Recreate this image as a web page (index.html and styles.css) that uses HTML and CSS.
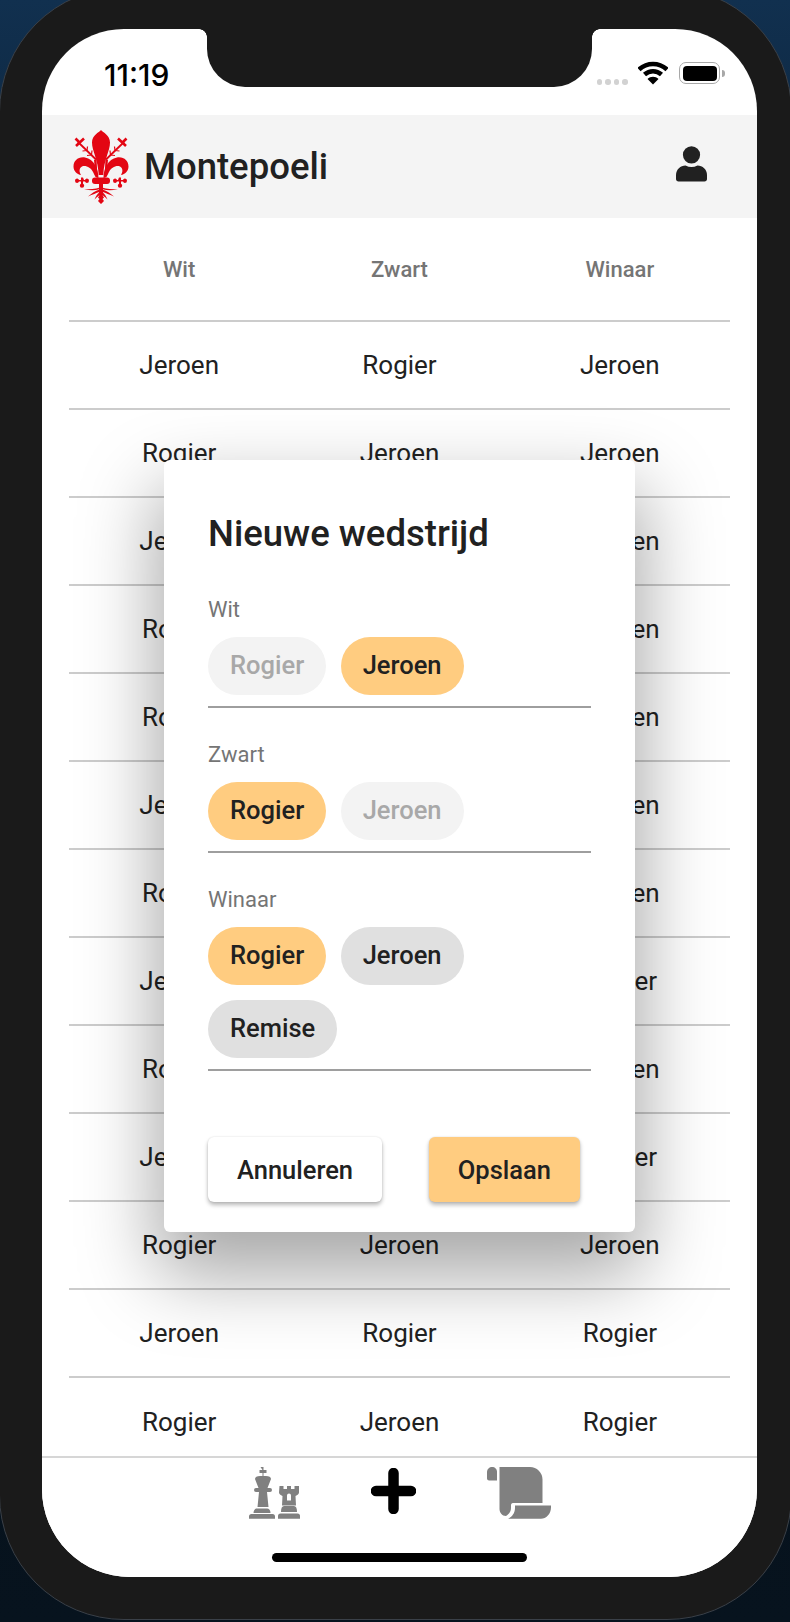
FILE: index.html
```html
<!DOCTYPE html>
<html lang="nl">
<head>
<meta charset="utf-8">
<title>Montepoeli</title>
<link rel="stylesheet" href="styles.css">
</head>
<body>
<div class="device">
  <div class="screen">
    <div class="notch"></div>
    <div class="status">
      <span class="time">11:19</span>
      <div class="status-icons">
        <div class="signal"><i></i><i></i><i></i><i></i></div>
        <svg class="wifi" width="30" height="24" viewBox="0 0 30 24">
          <path d="M1 8.500C9 1 21 1 29 8.500" class="wifi-arc"/>
          <path d="M6.500 13.500C11.500 9 18.500 9 23.500 13.500" class="wifi-arc"/>
          <path d="M15 23.500L9.500 18C12.500 15 17.500 15 20.500 18Z" class="wifi-dot"/>
        </svg>
        <div class="battery"><div class="battery-fill"></div></div>
        <div class="battery-nub"></div>
      </div>
    </div>
    <header class="appbar">
      <svg class="logo" width="56" height="75" viewBox="0 0 56 75">
        <defs>
          <g id="half">
            <path d="M30.500 49C30.500 40 35 30 44 28.500C51 27.500 55.500 32 55.500 37.500C55.500 42 52 45.500 48 46C50 43 50 39 47 37.500C43 36 38 39 36 43C34.500 46 33.500 49 30.500 49Z"/>
            <path d="M33 30.500L51 13" class="logo-line"/>
            <path d="M37.500 26L37 21.500M42 21.500L41.500 17.500M37.500 26L42 26.500M42 21.500L46.500 22" class="logo-thin"/>
            <path d="M45 9.500L53 17M53.500 9.500L50 13" class="logo-cross"/>
            <path d="M46 47.500h2v2.500h2a2 2 0 0 1 1.800-1.500a2.200 2.200 0 0 1 0 4.400a2 2 0 0 1-1.800-1.300h-2v2.200a2 2 0 0 1 1.200 1.800a2.200 2.200 0 0 1-4.400 0a2 2 0 0 1 1.200-1.800v-2.200h-2a2 2 0 0 1-1.800 1.300a2.200 2.200 0 0 1 0-4.400a2 2 0 0 1 1.800 1.500h1Z" transform="translate(0 1)"/>
            <path d="M29 58.500C34 60 39 60 45 60.500C39 61.500 34 61.500 30.500 60.500Z"/>
            <path d="M29.500 60.500C34 62 37 64 41 67.500C36 65.500 33 64 29.500 63Z"/>
            <path d="M29 63C32 65 33 67 34.500 70.500C32 68 30 66.500 28.500 65.500Z"/>
          </g>
        </defs>
        <g class="logo-fill">
          <use href="#half"/>
          <use href="#half" transform="matrix(-1 0 0 1 56 0)"/>
          <path d="M28 1C30 3.500 37 6 37 13.500C37 22 31 30 30.300 46H25.700C25 30 19 22 19 13.500C19 6 26 3.500 28 1Z"/>
          <path d="M23.500 30L24.500 48H22.700L21 31ZM32.500 30L31.500 48H33.300L35 31Z"/>
          <rect x="19" y="48.500" width="18" height="6.500" rx="3"/>
          <path d="M26 55H30V66.500H26Z"/>
          <path d="M28 64L31 68.500L29.500 70L31 72L28 75L25 72L26.500 70L25 68.500Z"/>
        </g>
      </svg>
      <h1 class="brand">Montepoeli</h1>
      <svg class="user" width="31" height="36" viewBox="0 0 31 36">
        <circle cx="15.500" cy="8.800" r="8.600"/>
        <path d="M0 33V29C0 23.500 4.500 19.500 9.500 19.500C13.500 21.500 17.500 21.500 21.500 19.500C26.500 19.500 31 23.500 31 29V33C31 34.500 30 35.500 28.500 35.500H2.500C1 35.500 0 34.500 0 33Z"/>
      </svg>
    </header>
    <main class="content">
      <div class="table">
        <div class="row head"><span>Wit</span><span>Zwart</span><span>Winaar</span></div>
        <div class="row"><span>Jeroen</span><span>Rogier</span><span>Jeroen</span></div>
        <div class="row"><span>Rogier</span><span>Jeroen</span><span>Jeroen</span></div>
        <div class="row"><span>Jeroen</span><span>Rogier</span><span>Jeroen</span></div>
        <div class="row"><span>Rogier</span><span>Jeroen</span><span>Jeroen</span></div>
        <div class="row"><span>Rogier</span><span>Jeroen</span><span>Jeroen</span></div>
        <div class="row"><span>Jeroen</span><span>Rogier</span><span>Jeroen</span></div>
        <div class="row"><span>Rogier</span><span>Jeroen</span><span>Jeroen</span></div>
        <div class="row"><span>Jeroen</span><span>Rogier</span><span>Rogier</span></div>
        <div class="row"><span>Rogier</span><span>Jeroen</span><span>Jeroen</span></div>
        <div class="row"><span>Jeroen</span><span>Rogier</span><span>Rogier</span></div>
        <div class="row"><span>Rogier</span><span>Jeroen</span><span>Jeroen</span></div>
        <div class="row"><span>Jeroen</span><span>Rogier</span><span>Rogier</span></div>
        <div class="row"><span>Rogier</span><span>Jeroen</span><span>Rogier</span></div>
      </div>
      <section class="modal">
        <h2 class="modal-title">Nieuwe wedstrijd</h2>
        <div class="field">
          <div class="field-label">Wit</div>
          <div class="chips">
            <span class="chip off">Rogier</span>
            <span class="chip on">Jeroen</span>
          </div>
        </div>
        <div class="field">
          <div class="field-label">Zwart</div>
          <div class="chips">
            <span class="chip on">Rogier</span>
            <span class="chip off">Jeroen</span>
          </div>
        </div>
        <div class="field">
          <div class="field-label">Winaar</div>
          <div class="chips">
            <span class="chip on">Rogier</span>
            <span class="chip">Jeroen</span>
            <span class="chip">Remise</span>
          </div>
        </div>
        <div class="actions">
          <button class="btn btn-cancel">Annuleren</button>
          <button class="btn btn-save">Opslaan</button>
        </div>
      </section>
    </main>
    <nav class="tabbar">
      <svg class="tab-icon" width="52" height="52" viewBox="0 0 52 52">
        <path d="M11.500 0h3v3h3v3h-3v3h2.500c3 0 5 1 5 3l-3.500 9h2.500a2 2 0 0 1 0 4h-3l1.500 15h-11l1.500-15h-3a2 2 0 0 1 0-4h2.500l-3.500-9c0-2 2-3 5-3h2.500v-3h-3v-3h3Z"/>
        <path d="M8 41.500h10c2 0 3.500 1.500 3.500 4.500h-17c0-3 1.500-4.500 3.500-4.500Z"/>
        <path d="M2.500 47h21a2.500 2.500 0 0 1 2.500 2.500v2.300h-26v-2.300a2.500 2.500 0 0 1 2.500-2.500Z"/>
        <path d="M30.500 19h4v3h3.500v-3h4v3h3.500v-3h4.500v6.500c0 1.500-1.500 2.500-3.500 3.500l.5 9.500h-14l.5-9.500c-2-1-3.500-2-3.500-3.500ZM38 28.500v5h4v-5a2 2 0 0 0-4 0Z" fill-rule="evenodd"/>
        <path d="M35 39h10c2 0 3 2 3 6h-16c0-4 1-6 3-6Z"/>
        <path d="M31.500 46.500h17a2.500 2.500 0 0 1 2.500 2.500v2.800h-22v-2.800a2.500 2.500 0 0 1 2.500-2.500Z"/>
      </svg>
      <svg class="tab-plus" width="45" height="46" viewBox="0 0 45 46">
        <path d="M22.500 5V41M5 23H40"/>
      </svg>
      <svg class="tab-icon" width="65" height="52" viewBox="0 0 65 52">
        <path d="M0 5C0 2 2.500 0 5 0C8 0 10 2 10 5V13.500H2C1 13.500 0 12.500 0 11.500Z"/>
        <path d="M12.500 0H43A12.500 12.500 0 0 1 55.500 12.500V36H26C24.500 36 24 37 24 38.500V41C24 45 21.500 47.500 19 49C15 49 12.500 45.500 12.500 42Z"/>
        <path d="M28 38.500H64V40.500C64 47 59 51.800 54 51.800H21C25 50 28 46 28 41Z"/>
      </svg>
    </nav>
    <div class="home-indicator"></div>
  </div>
</div>
</body>
</html>
```
FILE: styles.css
```css
* { box-sizing: border-box; }
html, body { margin: 0; padding: 0; }
body {
  width: 790px;
  height: 1622px;
  overflow: hidden;
  font-family: Roboto, "Liberation Sans", sans-serif;
  color: #212121;
  background: linear-gradient(180deg, #11304f 0%, #0b2238 18%, #04101a 60%, #07131e 100%);
}
.device {
  width: 793px;
  height: 1633px;
  margin: -13px 0 0 -1px;
  padding: 41px 34px 42px 42px;
  background: #1a1a1a;
  border: 1px solid #3a4048;
  border-radius: 125px;
}
.screen {
  position: relative;
  width: 715px;
  height: 1548px;
  background: #fff;
  border-radius: 82px 82px 88px 88px;
  overflow: hidden;
  display: flex;
  flex-direction: column;
}
.notch {
  position: absolute;
  top: 0;
  left: 165px;
  width: 385px;
  height: 58px;
  background: #1a1a1a;
  border-radius: 0 0 38px 38px;
  z-index: 3;
}
.notch::before, .notch::after {
  content: "";
  position: absolute;
  top: 0;
  width: 8px;
  height: 8px;
}
.notch::before {
  left: -8px;
  background: radial-gradient(circle at 0 100%, transparent 7.500px, #1a1a1a 8px);
}
.notch::after {
  right: -8px;
  background: radial-gradient(circle at 100% 100%, transparent 7.500px, #1a1a1a 8px);
}
.status {
  height: 86px;
  flex: none;
  display: flex;
  justify-content: space-between;
  padding: 28px 32px 0 62px;
}
.time {
  font-family: Inter, Roboto, sans-serif;
  font-weight: 500;
  font-size: 30px;
  line-height: 36px;
  color: #000;
}
.status-icons {
  display: flex;
  align-items: flex-start;
}
.signal {
  display: flex;
  gap: 3px;
  margin: 22px 10px 0 0;
}
.signal i {
  width: 5.600px;
  height: 5.600px;
  border-radius: 50%;
  background: #d2d2d2;
}
.wifi { margin: 4px 11px 0 0; }
.wifi-arc { fill: none; stroke: #000; stroke-width: 4.500; }
.wifi-dot { fill: #000; }
.battery {
  width: 41px;
  height: 22px;
  margin-top: 5px;
  padding: 2.500px;
  border: 1.500px solid #a8a8a8;
  border-radius: 7px;
}
.battery-fill {
  width: 100%;
  height: 100%;
  background: #000;
  border-radius: 4px;
}
.battery-nub {
  width: 3px;
  height: 7px;
  margin: 13px 0 0 2px;
  background: #a8a8a8;
  border-radius: 0 3px 3px 0;
}
.appbar {
  flex: none;
  height: 103px;
  display: flex;
  align-items: center;
  padding: 0 50px 0 31px;
  background: #f4f4f4;
}
.logo { margin: 0 15px 0 0; flex: none; }
.logo-fill { fill: #e30613; }
.logo-line { fill: none; stroke: #e30613; stroke-width: 1.800; }
.logo-thin { fill: none; stroke: #e30613; stroke-width: 1.200; }
.logo-cross { fill: none; stroke: #e30613; stroke-width: 2.600; }
.brand {
  flex: 1;
  margin: 2px 0 0;
  font-size: 36.500px;
  font-weight: 500;
  line-height: 1;
  color: #212121;
}
.user { fill: #212121; margin-bottom: 6px; }
.content {
  flex: 1;
  min-height: 0;
  position: relative;
  overflow: hidden;
}
.table { padding: 0 27px; }
.row {
  display: grid;
  grid-template-columns: repeat(3, 1fr);
  height: 88px;
  align-items: center;
  text-align: center;
  border-bottom: 2px solid #cccccc;
  font-size: 26px;
  color: #212121;
}
.row:last-child { border-bottom: 0; }
.row.head {
  height: 104px;
  font-size: 22px;
  font-weight: 500;
  color: #757575;
}
.modal {
  position: absolute;
  top: 242px;
  left: 122px;
  width: 471px;
  height: 772px;
  padding: 52px 44px 0;
  background: #fff;
  border-radius: 6px;
  box-shadow: 0 36px 76px 8px rgba(0, 0, 0, .34);
}
.modal-title {
  margin: 0 0 40px;
  font-size: 36.500px;
  font-weight: 500;
  line-height: 44px;
  color: #212121;
}
.field {
  border-bottom: 2px solid #9e9e9e;
  padding-bottom: 11px;
  margin-bottom: 33px;
}
.field-label {
  font-size: 22px;
  line-height: 28px;
  color: #757575;
  margin-bottom: 13px;
}
.chips {
  display: flex;
  flex-wrap: wrap;
  gap: 15px 14.500px;
}
.chip {
  height: 58px;
  padding: 0 22px;
  border-radius: 29px;
  background: #e0e0e0;
  font-size: 25.500px;
  font-weight: 500;
  line-height: 57px;
  color: #212121;
}
.chip.on { background: #ffcc80; }
.chip.off { background: #f3f3f3; color: #a8a8a8; }
.actions {
  display: flex;
  justify-content: space-between;
  padding-right: 11px;
  margin-top: 66px;
}
.btn {
  height: 65px;
  padding: 0 29px;
  border: 0;
  border-radius: 6px;
  font-family: inherit;
  font-size: 25.500px;
  font-weight: 500;
  color: #212121;
  box-shadow: 0 3px 4px rgba(0, 0, 0, .28), 0 0 2px rgba(0, 0, 0, .12);
}
.btn-cancel { background: #fff; }
.btn-save { background: #ffcc80; }
.tabbar {
  flex: none;
  height: 121px;
  display: flex;
  justify-content: center;
  align-items: flex-start;
  gap: 71px;
  padding: 9px 0 0 2px;
  border-top: 2px solid #d6d6d6;
  background: #fff;
}
.tab-icon { fill: #808080; }
.tab-plus { fill: none; stroke: #000; stroke-width: 10.500; stroke-linecap: round; margin: 1px 0 0 -1px; }
.home-indicator {
  position: absolute;
  left: 230px;
  bottom: 15px;
  width: 255px;
  height: 9px;
  border-radius: 5px;
  background: #000;
}
```
